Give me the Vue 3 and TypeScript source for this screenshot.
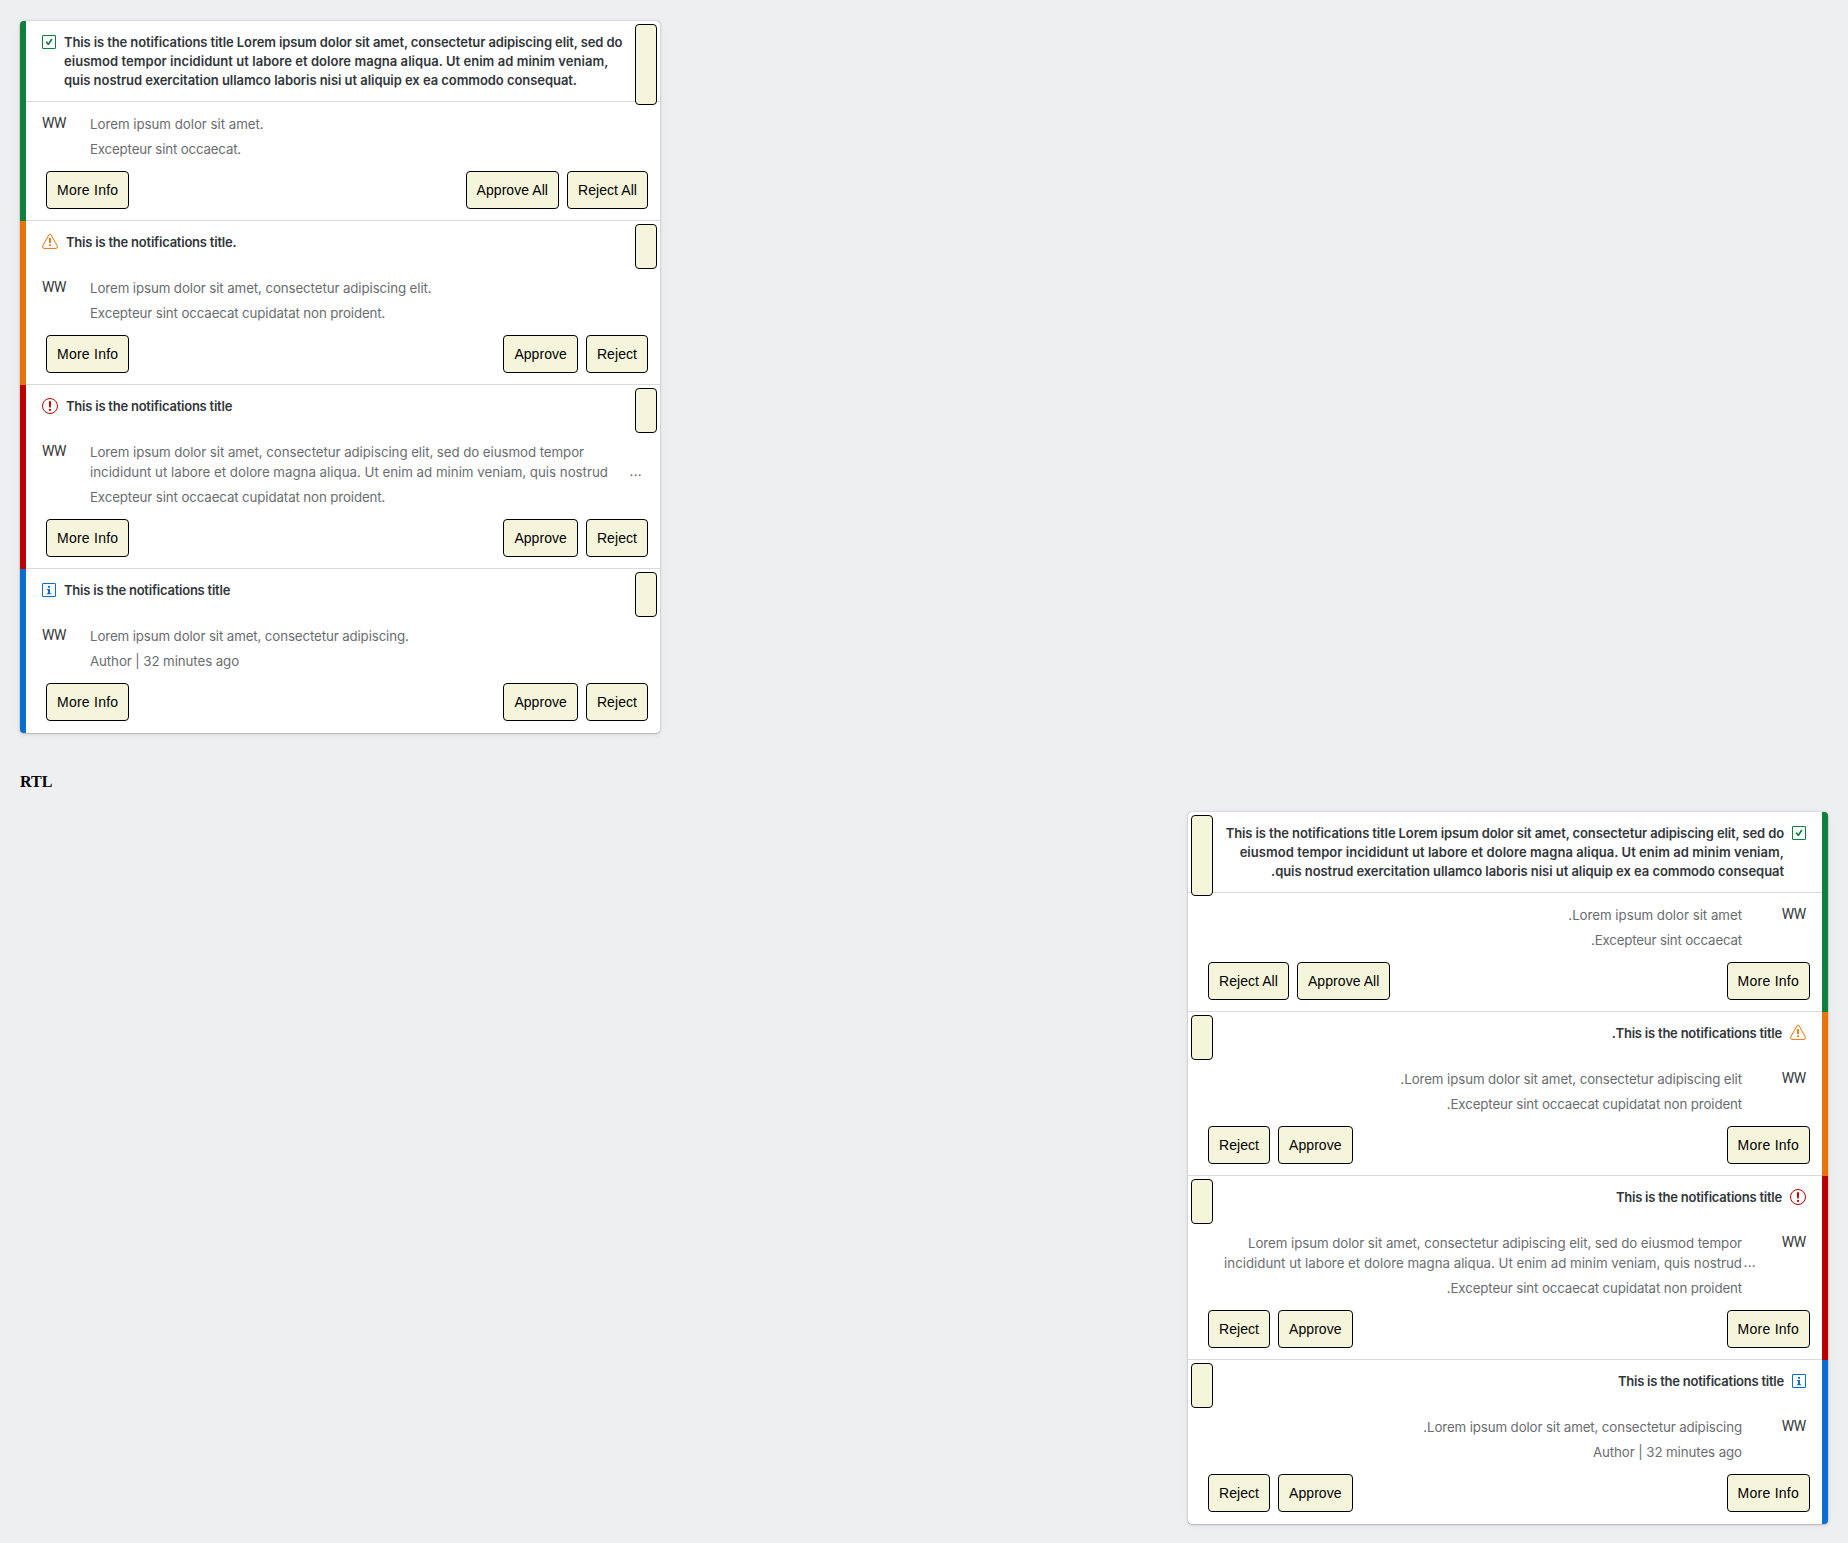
<script setup lang="ts">
interface Line { text: string; tracking?: number }
interface Item {
  kind: 'success' | 'warning' | 'error' | 'info'
  title: Line[]
  body: Line[]
  footer: Line
  actions: string[]
  more?: boolean
}

const shortTitle: Line = { text: 'This is the notifications title', tracking: -0.23 }
const proident: Line = { text: 'Excepteur sint occaecat cupidatat non proident.', tracking: -0.12 }

const items: Item[] = [
  {
    kind: 'success',
    title: [
      { text: 'This is the notifications title Lorem ipsum dolor sit amet, consectetur adipiscing elit, sed do', tracking: -0.115 },
      { text: 'eiusmod tempor incididunt ut labore et dolore magna aliqua. Ut enim ad minim veniam,\u200e', tracking: 0.04 },
      { text: 'quis nostrud exercitation ullamco laboris nisi ut aliquip ex ea commodo consequat.', tracking: -0.055 },
    ],
    body: [{ text: 'Lorem ipsum dolor sit amet.', tracking: -0.03 }],
    footer: { text: 'Excepteur sint occaecat.', tracking: -0.17 },
    actions: ['Approve All', 'Reject All'],
  },
  {
    kind: 'warning',
    title: [{ text: 'This is the notifications title.', tracking: -0.22 }],
    body: [{ text: 'Lorem ipsum dolor sit amet, consectetur adipiscing elit.', tracking: -0.1 }],
    footer: proident,
    actions: ['Approve', 'Reject'],
  },
  {
    kind: 'error',
    title: [shortTitle],
    body: [
      { text: 'Lorem ipsum dolor sit amet, consectetur adipiscing elit, sed do eiusmod tempor', tracking: -0.07 },
      { text: 'incididunt ut labore et dolore magna aliqua. Ut enim ad minim veniam, quis nostrud', tracking: -0.01 },
    ],
    footer: proident,
    actions: ['Approve', 'Reject'],
    more: true,
  },
  {
    kind: 'info',
    title: [shortTitle],
    body: [{ text: 'Lorem ipsum dolor sit amet, consectetur adipiscing.', tracking: -0.12 }],
    footer: { text: 'Author | 32 minutes ago', tracking: -0.09 },
    actions: ['Approve', 'Reject'],
  },
]

const spacing = (line: Line) => ({ letterSpacing: `${line.tracking ?? 0}px` })
</script>

<template>
  <main class="page">
    <template v-for="dir in ['ltr', 'rtl']" :key="dir">
      <h4 v-if="dir === 'rtl'" class="heading">RTL</h4>
      <div :dir="dir">
        <section class="group">
          <article v-for="item in items" :key="item.kind" class="item" :class="item.kind">
            <header class="header" :class="{ ruled: item.title.length > 1 }">
              <svg v-if="item.kind === 'success'" class="icon" width="14" height="16" viewBox="0 0 14 16">
                <rect x=".5" y="2.5" width="13" height="13" rx=".3" fill="none" stroke="currentColor" />
                <path d="M3.6 9.2L4.9 8.1 6.2 9.9 9.2 5.6 10.6 6.4 6.9 12.1H5.8Z" fill="currentColor" />
              </svg>
              <svg v-else-if="item.kind === 'warning'" class="icon" width="16" height="16" viewBox="0 0 16 16">
                <path d="M7 1.7Q8 .1 9 1.7L15.2 12.8Q16 15.2 14 15.4H2Q0 15.2 .8 12.8Z" fill="none" stroke="currentColor" />
                <path d="M8 5v5M8 11.3v1.7" stroke="currentColor" stroke-width="1.8" />
              </svg>
              <svg v-else-if="item.kind === 'error'" class="icon" width="16" height="16" viewBox="0 0 16 16">
                <circle cx="8" cy="8" r="7.5" fill="none" stroke="currentColor" />
                <path d="M6.9 3.2h2.2L8.8 9.6H7.2Z" fill="currentColor" />
                <circle cx="8" cy="11.9" r="1.1" fill="currentColor" />
              </svg>
              <svg v-else class="icon" width="14" height="16" viewBox="0 0 14 16">
                <rect x=".5" y="2.5" width="13" height="13" rx=".3" fill="none" stroke="currentColor" />
                <path d="M6 5h2v1.7H6zM5 8h3v4.3h1.2v1H4.9v-1H6V9H5z" fill="currentColor" />
              </svg>
              <h2 class="title">
                <span v-for="line in item.title" :key="line.text" class="line" :style="spacing(line)">{{ line.text }}</span>
              </h2>
              <button class="close" type="button" aria-label="Close"></button>
            </header>
            <div class="body">
              <span class="avatar">WW</span>
              <div class="content">
                <div class="text">
                  <span v-for="line in item.body" :key="line.text" class="line" :style="spacing(line)">{{ line.text }}</span>
                  <span v-if="item.more" class="more">...</span>
                </div>
                <div class="footer" :style="spacing(item.footer)">{{ item.footer.text }}</div>
              </div>
            </div>
            <div class="actions">
              <button class="button info-button" type="button">More Info</button>
              <span class="spacer"></span>
              <button v-for="label in item.actions" :key="label" class="button" type="button">{{ label }}</button>
            </div>
          </article>
        </section>
      </div>
    </template>
  </main>
</template>

<style>
body { background: #edeff0; }
</style>

<style scoped>
.page { padding: 21px 20px 19px; }
.heading { margin: 38px 0 20px; font: bold 16px/21px "Liberation Serif", serif; color: #000; }
.group {
  width: 640px;
  border-radius: 4px;
  background: #fff;
  box-shadow: 0 0 1px rgba(0, 0, 0, .5), 0 1px 1px rgba(0, 0, 0, .12), 0 1px 5px rgba(0, 0, 0, .12);
  overflow: hidden;
  font: 13.3px/20px Inter, "Liberation Sans", sans-serif;
  color: #32363a;
}
.item {
  box-sizing: border-box;
  border-inline-start: 6px solid var(--tone);
  background: linear-gradient(#d9d9d9, #d9d9d9) bottom / 100% 1px no-repeat;
  padding-bottom: 12px;
}
.item:last-child { background: none; }
.success { --tone: #107e3e; }
.warning { --tone: #e9730c; }
.error { --tone: #bb0000; }
.info { --tone: #0a6ed1; }
.header { display: flex; height: 45px; box-sizing: border-box; padding: 3px 3px 0 16px; }
.ruled { height: 81px; border-bottom: 1px solid #d9d9d9; }
[dir="rtl"] .header { padding: 3px 16px 0 3px; }
.icon { flex: none; margin-top: 9px; color: var(--tone); }
.error .icon { margin-top: 10px; }
.title { flex: 1; margin: 9px 0 0; margin-inline-start: 8px; font-size: 13px; line-height: 19px; font-weight: 600; }
.line { display: block; white-space: nowrap; }
.close {
  flex: none;
  box-sizing: border-box;
  width: 22px;
  height: 45px;
  padding: 0;
  border: 1px solid #000;
  border-radius: 4px;
  background: beige;
}
.ruled .close { height: 81px; }
.body { display: flex; padding: 12px 16px 0; }
.avatar { flex: none; width: 48px; margin-top: -1px; height: 20px; font-family: Roboto, sans-serif; font-size: 14px; letter-spacing: -.3px; }
[dir="rtl"] .avatar { width: 64px; }
.content { flex: 1; color: #6a6d70; }
.text { position: relative; }
.more { position: absolute; bottom: 1px; right: 2px; letter-spacing: .3px; }
[dir="rtl"] .more { right: -14px; }
.footer { margin-top: 5px; white-space: nowrap; }
.actions { display: flex; padding: 12px 8px 0 16px; }
.button {
  box-sizing: border-box;
  height: 38px;
  margin: 0 4px;
  padding: 0 10px;
  border: 1px solid #000;
  border-radius: 4px;
  background: beige;
  color: #000;
  font: 14px/20px "Liberation Sans", Arial, sans-serif;
  letter-spacing: .06px;
}
.info-button { letter-spacing: .25px; }
.spacer { flex: 1; }
</style>
